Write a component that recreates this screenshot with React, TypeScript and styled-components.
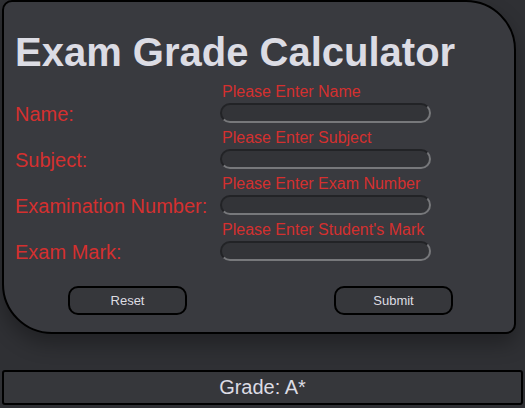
import styled, { createGlobalStyle } from "styled-components"

const GlobalStyle = createGlobalStyle`
  html, body {
    margin: 0;
    padding: 0;
    background: #2f3034;
    font-family: "Liberation Sans", Arial, sans-serif;
  }
`

const fields = [
  { label: "Name:", hint: "Please Enter Name" },
  { label: "Subject:", hint: "Please Enter Subject" },
  { label: "Examination Number:", hint: "Please Enter Exam Number" },
  { label: "Exam Mark:", hint: "Please Enter Student's Mark" },
]

const App = () => {
  return <Page>
    <GlobalStyle />
    <Card>
      <Title>Exam Grade Calculator</Title>
      <Form>
        {fields.map(f => (
          <Row key={f.label}>
            <Label>{f.label}</Label>
            <Field>
              <Hint>{f.hint}</Hint>
              <Input type="text" />
            </Field>
          </Row>
        ))}
      </Form>
      <Buttons>
        <Button>Reset</Button>
        <Button>Submit</Button>
      </Buttons>
    </Card>
    <Grade>Grade: A*</Grade>
  </Page>
}

const red = '#d4302f'

const Page = styled.div`
  padding: 0 2px;
  display: flex;
  flex-direction: column;
`

const Card = styled.div`
  width: 514px;
  box-sizing: border-box;
  background: #393a3f;
  border: 2px solid #000;
  border-radius: 10px 50px 10px 50px;
  box-shadow: 0 10px 20px rgba(0, 0, 0, .3);
  padding: 27px 0 17px 11px;
`

const Title = styled.h1`
  margin: 0;
  font-size: 40px;
  font-weight: bold;
  color: #dcdce4;
  line-height: 46px;
`

const Form = styled.div`
  margin-top: 8px;
  display: flex;
  flex-direction: column;
  gap: 6px;
`

const Row = styled.div`
  display: flex;
  align-items: flex-end;
`

const Label = styled.div`
  width: 205px;
  font-size: 20px;
  line-height: 20px;
  color: ${red};
  margin-bottom: -1px;
`

const Field = styled.div`
  display: flex;
  flex-direction: column;
  gap: 2px;
`

const Hint = styled.div`
  font-size: 16px;
  line-height: 18px;
  color: ${red};
  padding-left: 2px;
`

const Input = styled.input`
  width: 211px;
  height: 20px;
  box-sizing: border-box;
  background: #333438;
  border: 2px solid;
  border-color: #222326 #77787b #77787b #222326;
  border-radius: 10px;
  outline: none;
`

const Buttons = styled.div`
  margin-top: 25px;
  display: flex;
  justify-content: space-between;
  padding: 0 61px 0 53px;
`

const Button = styled.button`
  width: 119px;
  height: 29px;
  background: #36373b;
  border: 2px solid #000;
  border-radius: 10px;
  color: #dddde2;
  font-family: "Liberation Sans", Arial, sans-serif;
  font-size: 13px;
`

const Grade = styled.div`
  margin-top: 36px;
  height: 35px;
  box-sizing: border-box;
  border: 2px solid #000;
  border-radius: 3px;
  background: #36373b;
  color: #dcdce4;
  font-size: 20px;
  display: flex;
  align-items: center;
  justify-content: center;
`

export default App
